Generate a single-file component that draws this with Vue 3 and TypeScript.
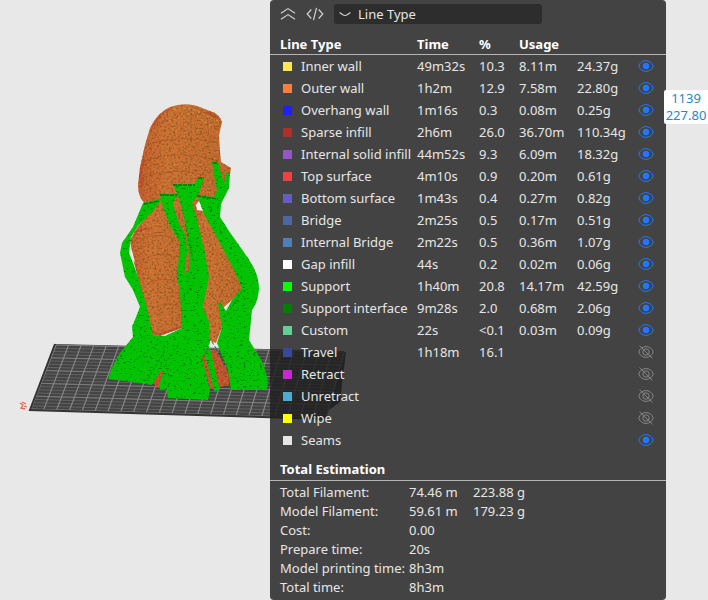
<script setup lang="ts">
import { ref } from 'vue'

interface LineRow {
  name: string
  color: string
  time: string
  percent: string
  length: string
  weight: string
  visible: boolean
}

const row = (
  name: string, color: string, time = '', percent = '', length = '', weight = '', visible = true,
): LineRow => ({ name, color, time, percent, length, weight, visible })

const rows = ref<LineRow[]>([
  row('Inner wall', '#ffe64d', '49m32s', '10.3', '8.11m', '24.37g'),
  row('Outer wall', '#ff7d38', '1h2m', '12.9', '7.58m', '22.80g'),
  row('Overhang wall', '#1f1fff', '1m16s', '0.3', '0.08m', '0.25g'),
  row('Sparse infill', '#b03029', '2h6m', '26.0', '36.70m', '110.34g'),
  row('Internal solid infill', '#9654cc', '44m52s', '9.3', '6.09m', '18.32g'),
  row('Top surface', '#f04040', '4m10s', '0.9', '0.20m', '0.61g'),
  row('Bottom surface', '#665cc7', '1m43s', '0.4', '0.27m', '0.82g'),
  row('Bridge', '#4d67a6', '2m25s', '0.5', '0.17m', '0.51g'),
  row('Internal Bridge', '#4d80ba', '2m22s', '0.5', '0.36m', '1.07g'),
  row('Gap infill', '#ffffff', '44s', '0.2', '0.02m', '0.06g'),
  row('Support', '#00ff00', '1h40m', '20.8', '14.17m', '42.59g'),
  row('Support interface', '#008000', '9m28s', '2.0', '0.68m', '2.06g'),
  row('Custom', '#5ed194', '22s', '<0.1', '0.03m', '0.09g'),
  row('Travel', '#38489b', '1h18m', '16.1', '', '', false),
  row('Retract', '#cd22d6', '', '', '', '', false),
  row('Unretract', '#49add6', '', '', '', '', false),
  row('Wipe', '#ffff00', '', '', '', '', false),
  row('Seams', '#e6e6e6'),
])

const totals: [string, string, string?][] = [
  ['Total Filament:', '74.46 m', '223.88 g'],
  ['Model Filament:', '59.61 m', '179.23 g'],
  ['Cost:', '0.00'],
  ['Prepare time:', '20s'],
  ['Model printing time:', '8h3m'],
  ['Total time:', '8h3m'],
]

const view = ref('Line Type')

// Build plate grid, interpolated between the four projected corners.
const corner = { tl: [56, 345], tr: [344, 352], bl: [31, 409], br: [326, 418] }
const mix = (a: number[], b: number[], t: number) => [a[0] + (b[0] - a[0]) * t, a[1] + (b[1] - a[1]) * t]
const seg = (a: number[], b: number[]) => `M${a[0].toFixed(1)} ${a[1].toFixed(1)}L${b[0].toFixed(1)} ${b[1].toFixed(1)}`
const columns = Array.from({ length: 24 }, (_, i) =>
  seg(mix(corner.tl, corner.tr, i / 23), mix(corner.bl, corner.br, i / 23))).join('')
const lines = (n: number) => Array.from({ length: n + 1 }, (_, i) =>
  seg(mix(corner.tl, corner.bl, i / n), mix(corner.tr, corner.br, i / n))).join('')
const minorRows = lines(20)
const majorRows = lines(5)
</script>

<template>
  <main class="viewer">
    <svg class="scene" width="708" height="600" viewBox="0 0 708 600" aria-hidden="true">
      <defs>
        <filter id="shell" x="0" y="0" width="1" height="1" color-interpolation-filters="sRGB">
          <feTurbulence type="fractalNoise" baseFrequency="0.42 0.5" numOctaves="2" seed="4" result="n" />
          <feColorMatrix in="n" values="0 0 0 0 .42  0 0 0 0 .26  0 0 0 0 .06  5 0 0 0 -2.5" result="dark" />
          <feColorMatrix in="n" values="0 0 0 0 .86  0 0 0 0 .58  0 0 0 0 .22  0 5 0 0 -2.5" result="light" />
          <feComposite in="dark" in2="SourceAlpha" operator="in" result="d" />
          <feComposite in="light" in2="SourceAlpha" operator="in" result="l" />
          <feComponentTransfer in="d" result="d2"><feFuncA type="linear" slope="0.45" /></feComponentTransfer>
          <feComponentTransfer in="l" result="l2"><feFuncA type="linear" slope="0.35" /></feComponentTransfer>
          <feMerge><feMergeNode in="SourceGraphic" /><feMergeNode in="l2" /><feMergeNode in="d2" /></feMerge>
        </filter>
        <filter id="tree" x="0" y="0" width="1" height="1" color-interpolation-filters="sRGB">
          <feTurbulence type="fractalNoise" baseFrequency="0.3 0.6" numOctaves="2" seed="9" />
          <feColorMatrix values="0 0 0 0 0  0 0 0 0 .5  0 0 0 0 0  7 0 0 0 -4.3" />
          <feComposite in2="SourceAlpha" operator="in" result="d" />
          <feMerge><feMergeNode in="SourceGraphic" /><feMergeNode in="d" /></feMerge>
        </filter>
        <linearGradient id="skin" x1="0" y1="0" x2="1" y2="0">
          <stop offset="0" stop-color="#c25a2c" />
          <stop offset=".3" stop-color="#cb7035" />
          <stop offset="1" stop-color="#bd672e" />
        </linearGradient>
      </defs>

      <path d="M329 352 346 352 340 402 329 410Z" fill="#3a3a3a" />
      <path d="M55 344 344 351 326 419 30 410Z" fill="#444" />
      <path :d="minorRows" stroke="#626262" stroke-width="1" fill="none" />
      <path :d="majorRows" stroke="#7c7c7c" stroke-width="1" fill="none" />
      <path :d="columns" stroke="#858585" stroke-width="1.2" fill="none" />
      <path d="M55 344 30 410 326 419" fill="none" stroke="#343434" stroke-width="2" />
      <path d="m20 403 3 2-2 3 4 1m-3-7 4 2m-2 2 3 1" fill="none" stroke="#e8674a" stroke-width="1.3" />

      <g filter="url(#shell)" fill="url(#skin)">
        <path d="M150 378 162 362 171 384 157 388Z" fill="#c3512b" />
        <path d="M199 350 216 350 230 376 229 385 210 389Z" fill="#c35030" />
        <path d="M156 205 137 228 130 240 133 258 140 287 147 317 152 335 160 336 182 328 184 277 190 278 193 205Z" />
        <path d="M190 205 209 208 220 237 233 263 243 288 232 300 224 307 222 327 216 343 207 340 203 305Z" />
        <path d="M138 185 140 167 145 145 150 128 Q158 112 170 107 Q184 102 197 106 L210 111 Q220 114 222 122 L219 135 220 152 221 162 231 168 230 174 218 199 195 206 160 213 145 204Q138 197 138 185Z" />
      </g>
      <g fill="none" stroke="#9c441f" stroke-width="1" opacity=".4">
        <path d="M151 130Q173 113 211 113M147 145Q178 133 218 143M144 161Q177 148 219 161M142 178Q172 166 205 175" />
        <path d="M138 242Q153 230 175 239M142 260Q158 250 176 258M147 284Q162 275 179 283M151 309Q167 300 180 307" />
      </g>
      <path d="M160 116Q175 106 193 109L218 121M169 121 192 113 211 126M138 233 150 229M196 231 205 218" fill="none" stroke="#d2b34a" stroke-width="1.5" opacity=".55" stroke-dasharray="2 3" />
      <path d="M143 186 140 176 144 160M152 127Q160 113 171 109M206 112 218 118M134 232 152 228M152 332 160 334 181 327" fill="none" stroke="#b8382c" stroke-width="2" opacity=".5" />

      <g filter="url(#tree)" fill="#04c304">
        <path d="M143 203 163 198 153 211 138 226 131 237 129 253 133 263 138 277 147 307 153 335 165 336 180 329 184 376 170 381 166 370 160 372 152 385 140 383 108 379 Q112 365 120 353L133 337 132 327 140 307 133 290 125 277 120 253 122 243 133 227Z" />
        <path d="M160 194 177 194 173 204 178 221 186 236 187 252 184 277 181 292 177 279 180 242 170 226 163 207Z" />
        <path d="M173 184 195 184 198 177 204 177 199 193 192 203 197 219 205 253 209 277 203 307 209 322 210 343 202 357 210 390 208 400 168 398 163 367 167 337 182 328 180 293 181 277 190 269 187 230 181 205 177 194Z" />
        <path d="M197 195 214 197 217 190 214 175 212 161 218 162 222 177 226 184 226 173 230 173 229 188 221 204 220 217 229 231 248 258 Q259 274 259 289 Q258 302 252 310L249 340 263 363 268 380 267 390 231 390 228 370 217 343 222 327 218 303 220 302 226 311 232 300 242 288 234 270 213 230 203 212Z" />
        <path d="M159 385 170 352 174 349 167 389 160 390ZM204 351 210 349 220 390 214 391Z" />
      </g>
      <path d="M160 195H177M173 185H195M198 178H204M197 196 218 199M144 204 159 201M213 163 218 163" stroke="#087008" stroke-width="1.5" stroke-dasharray="4 1" />
      <path d="M135 360 163 340M148 379 165 350M169 376 163 354M185 224 194 264M209 346 201 363M212 342 228 367M242 291 227 315" fill="none" stroke="#069106" stroke-width="1" stroke-dasharray="3 2" />
      <path d="M196 205 199 201 203 211 197 210ZM130 249 132 251 135 262 133 260Z" fill="#f4f2ec" />
    </svg>

    <section class="legend" aria-label="G-code preview legend">
      <div class="toolbar">
        <button type="button" class="tool" aria-label="Collapse">
          <svg width="16" height="16" viewBox="0 0 16 16"><path d="M1 7.2 8 2.6l7 4.6M1 13.2l7-4.6 7 4.6" /></svg>
        </button>
        <button type="button" class="tool" aria-label="Show code">
          <svg width="18" height="16" viewBox="0 0 18 16"><path d="M5.3 3.5 1.2 8l4.1 4.5M12.7 3.5 16.8 8l-4.1 4.5M10.5 1.8l-3 12.4" /></svg>
        </button>
        <div class="picker">
          <svg width="12" height="8" viewBox="0 0 12 8"><path d="M.6 2.4 3.8 4.8Q6 6.2 8.2 4.8L11.4 2.4" /></svg>
          <select v-model="view" aria-label="Color scheme">
            <option>Line Type</option>
          </select>
        </div>
      </div>

      <table class="types">
        <colgroup>
          <col class="c-swatch" /><col class="c-name" /><col class="c-time" />
          <col class="c-percent" /><col class="c-usage" /><col class="c-usage" /><col />
        </colgroup>
        <thead>
          <tr>
            <th colspan="2" scope="col" class="first">Line Type</th>
            <th scope="col">Time</th>
            <th scope="col">%</th>
            <th colspan="3" scope="col">Usage</th>
          </tr>
        </thead>
        <tbody>
          <tr v-for="r in rows" :key="r.name">
            <td class="swatch-cell"><span class="swatch" :style="{ background: r.color }"></span></td>
            <td>{{ r.name }}</td>
            <td>{{ r.time }}</td>
            <td>{{ r.percent }}</td>
            <td>{{ r.length }}</td>
            <td>{{ r.weight }}</td>
            <td class="eye-cell">
              <button
                type="button" class="eye" :class="{ off: !r.visible }"
                :aria-label="'Toggle ' + r.name" :aria-pressed="r.visible" @click="r.visible = !r.visible"
              >
                <svg width="16" height="14" viewBox="0 0 16 14">
                  <path d="M.7 7C2.2 3.3 4.7 1.6 8 1.6S13.8 3.3 15.3 7C13.8 10.7 11.3 12.4 8 12.4S2.2 10.7.7 7Z" />
                  <circle class="iris" cx="8" cy="7" r="3.2" />
                  <path v-if="!r.visible" d="M1.5.6 14.5 13.4" />
                </svg>
              </button>
            </td>
          </tr>
        </tbody>
      </table>

      <h2>Total Estimation</h2>
      <table class="totals">
        <colgroup><col class="t-label" /><col class="t-value" /><col /></colgroup>
        <tbody>
          <tr v-for="t in totals" :key="t[0]">
            <th scope="row">{{ t[0] }}</th>
            <td>{{ t[1] }}</td>
            <td>{{ t[2] }}</td>
          </tr>
        </tbody>
      </table>
    </section>

    <output class="layer"><span>1139</span><span>227.80</span></output>
  </main>
</template>

<style>
body {
  background: #e8e8e8;
}
</style>

<style scoped>
.viewer {
  position: relative;
  display: grid;
  grid-template-columns: 270px minmax(0, 1fr) 42px;
  min-height: 100vh;
  overflow: hidden;
  background: #e8e8e8;
  font-family: 'Noto Sans', sans-serif;
  font-size: 13px;
  color: #e6e6e6;
}
.scene {
  position: absolute;
  top: 0;
  left: 0;
}
.legend {
  position: relative;
  grid-column: 2;
  box-sizing: border-box;
  background: rgba(30, 30, 30, 0.82);
  border-radius: 4px;
}
.toolbar {
  display: flex;
  align-items: center;
  gap: 10px;
  padding: 4px 10px 0;
}
button {
  display: block;
  padding: 0;
  border: 0;
  background: none;
  cursor: pointer;
}
svg {
  display: block;
}
.tool path,
.picker path {
  fill: none;
  stroke: #d2d2d2;
  stroke-width: 1.2;
}
.picker {
  display: flex;
  align-items: center;
  width: 208px;
  height: 20px;
  box-sizing: border-box;
  padding-left: 5px;
  border-radius: 3px;
  background: #2d2d2d;
}
.picker select {
  flex: 1;
  height: 20px;
  padding: 0 0 0 7px;
  border: 0;
  appearance: none;
  background: transparent;
  color: #e6e6e6;
  font: inherit;
}
table {
  width: 100%;
  table-layout: fixed;
  border-collapse: separate;
  border-spacing: 0;
}
th,
td {
  padding: 0;
  text-align: left;
  white-space: nowrap;
}
.types {
  margin-top: 10px;
}
.types th {
  height: 20px;
  line-height: 20px;
  color: #fff;
  border-bottom: 1px solid #b4b4b4;
}
.types .first {
  padding-left: 10px;
}
.types td {
  height: 22px;
  line-height: 22px;
}
.c-swatch { width: 31px; }
.c-name { width: 116px; }
.c-time { width: 62px; }
.c-percent { width: 40px; }
.c-usage { width: 58px; }
.types .swatch-cell {
  padding-left: 13px;
}
.swatch {
  display: block;
  width: 9px;
  height: 9px;
}
.types .eye-cell {
  padding-left: 3px;
}
.eye path {
  fill: none;
  stroke: #1f78ff;
  stroke-width: 1;
}
.eye .iris {
  fill: #1f78ff;
}
.eye.off path,
.eye.off .iris {
  fill: none;
  stroke: #858585;
}
h2 {
  margin: 7px 0 0;
  padding: 0 10px;
  border-bottom: 1px solid #b4b4b4;
  font-size: 13px;
  line-height: 22px;
  color: #fff;
}
.totals {
  margin: 2px 0;
}
.totals th {
  padding-left: 10px;
  font-weight: 400;
}
.totals th,
.totals td {
  height: 19px;
  line-height: 19px;
}
.t-label { width: 139px; }
.t-value { width: 64px; }
.layer {
  position: absolute;
  top: 90px;
  right: 0;
  display: flex;
  flex-direction: column;
  align-items: center;
  width: 44px;
  border-radius: 2px 0 0 2px;
  background: #fff;
  color: #2687c8;
  line-height: 17px;
}
</style>
